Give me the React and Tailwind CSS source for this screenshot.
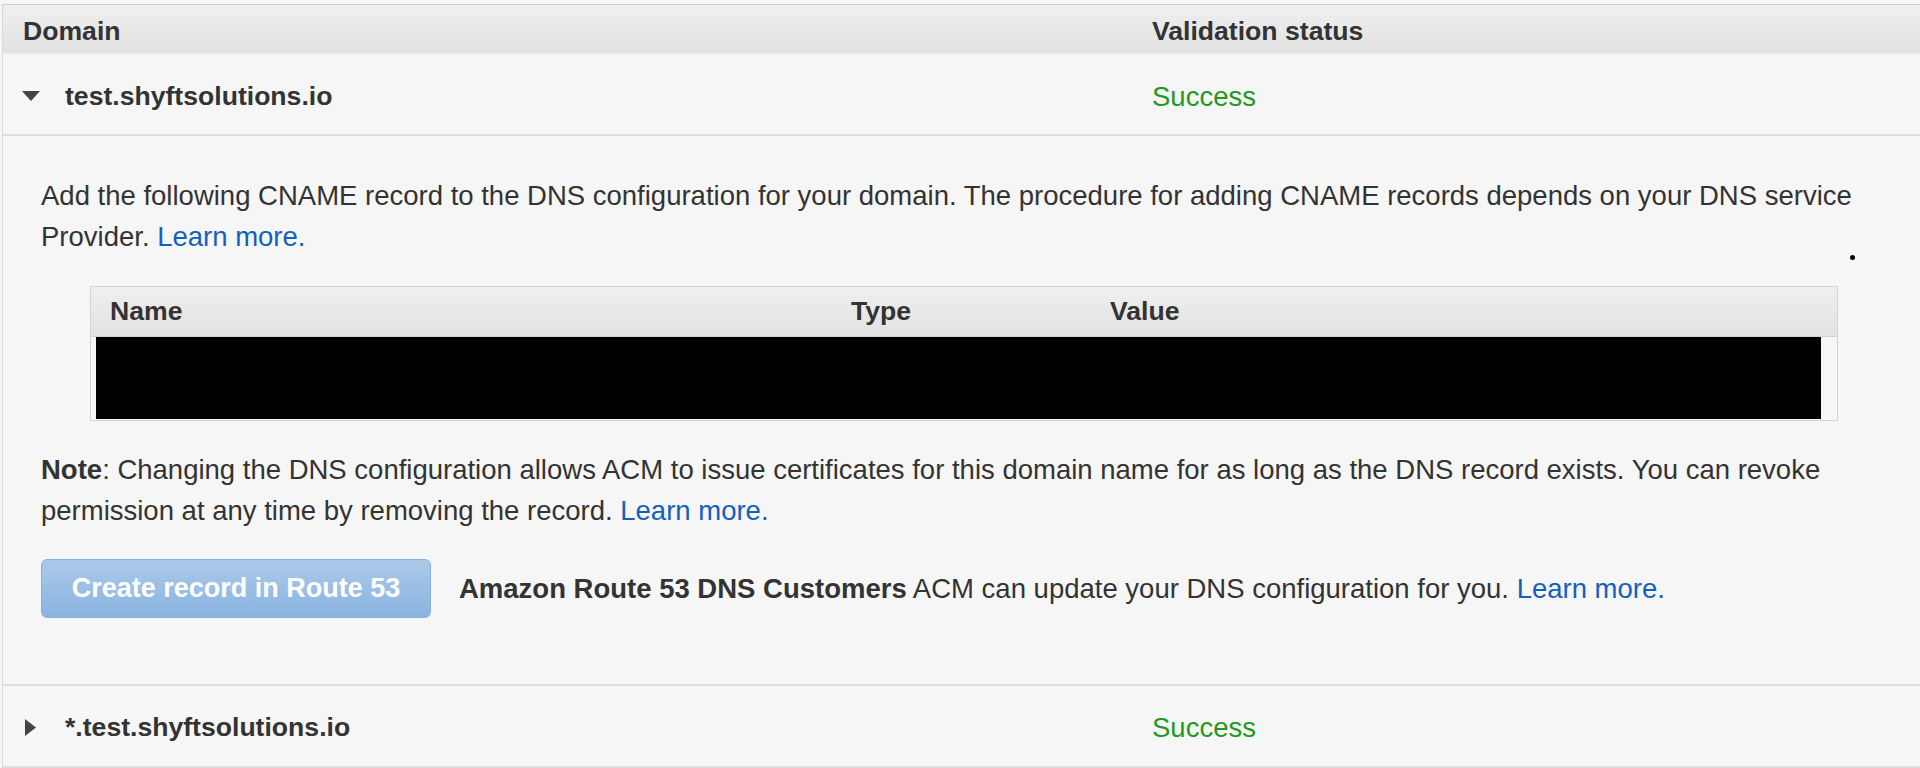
import React from "react";

const font = { fontFamily: '"Liberation Sans", Arial, Helvetica, sans-serif' };

function CaretDown() {
  return (
    <svg width="18" height="10" viewBox="0 0 18 10" className="shrink-0">
      <polygon points="0,0 18,0 9,10" fill="#444" />
    </svg>
  );
}

function CaretRight() {
  return (
    <svg width="11" height="17" viewBox="0 0 11 17" className="shrink-0">
      <polygon points="0,0 11,8.5 0,17" fill="#444" />
    </svg>
  );
}

function Link({ children }) {
  return <a className="text-[#1560bd]">{children}</a>;
}

export default function App() {
  return (
    <div
      className="w-full h-[768px] overflow-hidden bg-[#f6f6f6] pt-[4px] pl-[2px] text-[#333]"
      style={font}
    >
      {/* table header */}
      <div className="flex items-center h-[50px] pt-[6px] border-t border-[#cdcdcd] border-l border-l-[#d8d8d8] border-b-2 border-b-[#e9e9e9] bg-gradient-to-b from-[#efefef] to-[#e2e2e2] text-[26.6px] font-bold text-[#333]">
        <div className="w-[1149px] pl-[20px]">Domain</div>
        <div>Validation status</div>
      </div>

      {/* row 1 */}
      <div className="flex items-center h-[82px] pt-[5px] border-l border-[#d8d8d8] border-b-2 border-b-[#dedede] text-[26.6px]">
        <div className="w-[1149px] flex items-center">
          <div className="w-[62px] pl-[19px] flex items-center">
            <CaretDown />
          </div>
          <span className="font-bold text-[#333]">test.shyftsolutions.io</span>
        </div>
        <div className="text-[#1f9a1f] text-[27.5px]">Success</div>
      </div>

      {/* expanded panel */}
      <div className="relative border-l border-[#d8d8d8] border-b-2 border-b-[#dedede] pt-[39px] pb-[66px] pl-[38px] pr-[40px] text-[27.5px] leading-[41px] text-[#333]">
        <p>
          Add the following CNAME record to the DNS configuration for your domain. The procedure for adding CNAME records depends on your DNS service Provider. <Link>Learn more.</Link>
        </p>
        <span className="absolute left-[1847px] top-[119px] w-[5px] h-[5px] rounded-full bg-black" />

        {/* records table */}
        <div className="mt-[29px] ml-[49px] w-[1748px] border border-[#d3d3d3] bg-[#f6f6f6]">
          <div className="flex items-center h-[50px] border-b border-[#d3d3d3] bg-gradient-to-b from-[#efefef] to-[#e2e2e2] font-bold text-[26.6px] leading-none">
            <div className="w-[760px] pl-[19px]">Name</div>
            <div className="w-[259px]">Type</div>
            <div>Value</div>
          </div>
          <div className="pl-[5px] pr-[16px] pb-[1px]">
            <div className="h-[82px] bg-black" />
          </div>
        </div>

        <p className="mt-[28px]">
          <span className="font-bold">Note</span>: Changing the DNS configuration allows ACM to issue certificates for this domain name for as long as the DNS record exists. You can revoke permission at any time by removing the record. <Link>Learn more.</Link>
        </p>

        <div className="mt-[28px] flex items-center">
          <button className="h-[59px] w-[390px] rounded-[6px] border border-[#86b2e0] bg-gradient-to-b from-[#abc9e9] to-[#8ab4e0] text-white font-bold text-[27px] leading-none">
            Create record in Route 53
          </button>
          <p className="ml-[28px] leading-none">
            <span className="font-bold">Amazon Route 53 DNS Customers</span> ACM can update your DNS configuration for you. <Link>Learn more.</Link>
          </p>
        </div>
      </div>

      {/* row 2 */}
      <div className="flex items-center h-[82px] pt-[3px] border-l border-[#d8d8d8] border-b-2 border-b-[#dedede] text-[26.6px]">
        <div className="w-[1149px] flex items-center">
          <div className="w-[62px] pl-[22px] flex items-center">
            <CaretRight />
          </div>
          <span className="font-bold text-[#333]">*.test.shyftsolutions.io</span>
        </div>
        <div className="text-[#1f9a1f] text-[27.5px]">Success</div>
      </div>
    </div>
  );
}
